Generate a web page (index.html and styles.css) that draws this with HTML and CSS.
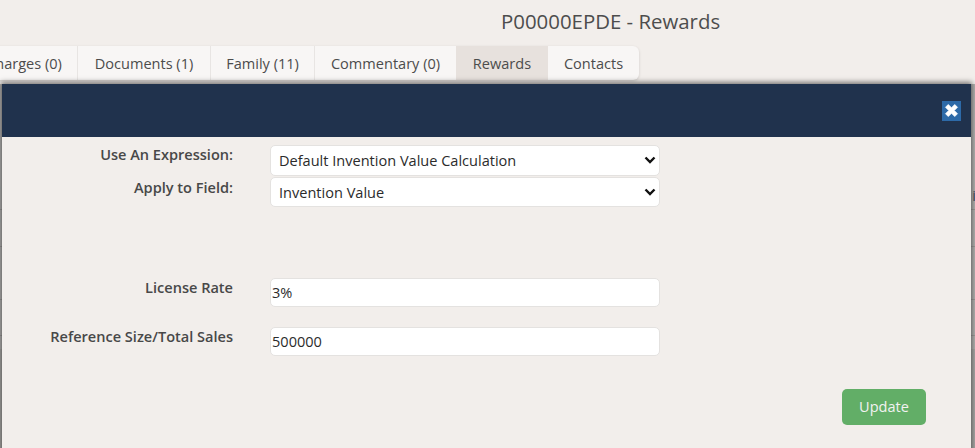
FILE: index.html
```html
<!DOCTYPE html>
<html lang="en-US"><head>
<meta charset="utf-8">
<meta name="viewport" content="width=device-width, initial-scale=1.0">
<title>P00000EPDE - Rewards</title>
<link rel="stylesheet" href="styles.css">
</head><body>

<div class="page">
	<h1 class="page-title">P00000EPDE - Rewards</h1>
	<div class="tabs">
		<a class="tab charges">Charges (0)</a>
		<a class="tab documents">Documents (1)</a>
		<a class="tab family">Family (11)</a>
		<a class="tab commentary">Commentary (0)</a>
		<a class="tab rewards active">Rewards</a>
		<a class="tab contacts">Contacts</a>
	</div>
	<div class="behind">
		<div class="behind-row r1"><span class="num">0</span><span class="name">i</span></div>
		<div class="behind-row r2"><span class="num">0</span></div>
		<div class="behind-row r3"></div>
		<div class="behind-row r4"></div>
		<div class="behind-row r5"></div>
	</div>
</div>

<div class="modal">
	<div class="modal-head">
		<button class="close" type="button" aria-label="Close">
			<svg width="15" height="15" viewBox="0 0 12 12"><path d="M1.2 3.4 3.4 1.2 6 3.8 8.6 1.2 10.8 3.4 8.2 6 10.8 8.6 8.6 10.8 6 8.2 3.4 10.8 1.2 8.6 3.8 6Z" fill="#fff" stroke="#fff" stroke-width="0.6" stroke-linejoin="round"/></svg>
		</button>
	</div>
	<form class="modal-body">
		<div class="row select-row">
			<label>Use An Expression:</label>
			<div class="select">Default Invention Value Calculation
				<svg class="chevron" width="12" height="8" viewBox="0 0 12 8"><path d="M1.5 1.5 6 6 10.5 1.5" fill="none" stroke="#111" stroke-width="2.4"/></svg>
			</div>
		</div>
		<div class="row select-row">
			<label>Apply to Field:</label>
			<div class="select">Invention Value
				<svg class="chevron" width="12" height="8" viewBox="0 0 12 8"><path d="M1.5 1.5 6 6 10.5 1.5" fill="none" stroke="#111" stroke-width="2.4"/></svg>
			</div>
		</div>
		<div class="row input-row rate">
			<label>License Rate</label>
			<input type="text" value="3%">
		</div>
		<div class="row input-row sales">
			<label>Reference Size/Total Sales</label>
			<input type="text" value="500000">
		</div>
		<div class="actions">
			<button class="update" type="button">Update</button>
		</div>
	</form>
</div>

</body></html>
```

FILE: styles.css
```css
html, body {
	margin : 0 ;
	height : 100% ;
	overflow : hidden ;
	background : #f2eeeb ;
	font-family : "Open Sans", "Noto Sans", sans-serif ;
	color : #4a4a4a ;
}
.page {
	display : flex ;
	flex-direction : column ;
	align-items : flex-start ;
	height : 100% ;
	overflow : hidden ;
}
.page-title {
	align-self : stretch ;
	margin : 0 ;
	padding : 8px 0 0 501px ;
	height : 46px ;
	box-sizing : border-box ;
	font-size : 20.4px ;
	line-height : 27px ;
	font-weight : 400 ;
	color : #4d4d4d ;
}
.tabs {
	display : flex ;
	margin-left : -35px ;
	height : 34px ;
	background : #f8f6f5 ;
	border-radius : 0 6px 6px 0 ;
	box-shadow : 0 1px 3px rgba( 0, 0, 0, 0.15 ) ;
}
.tab {
	box-sizing : border-box ;
	font-size : 14.55px ;
	line-height : 35px ;
	text-align : center ;
	border-right : 1px solid #e8e5e3 ;
	color : #4c4c4c ;
}
.tab.charges { width : 113px ; padding-left : 6px ; }
.tab.documents { width : 133px ; }
.tab.family { width : 104px ; }
.tab.commentary { width : 141px ; border-right : 0 ; }
.tab.rewards { width : 92px ; }
.tab.contacts { width : 91px ; border-right : 0 ; }
.tab.active { background : #e7e1dd ; border-right : 0 ; }

/* table of the page, only its ends show beside the modal */
.behind {
	align-self : stretch ;
	flex : 1 ;
	margin-top : 4px ;
	padding-top : 93px ;
	background : linear-gradient( #b2b1af 265px, #a8a6a4 265px ) ;
}
.behind-row {
	display : flex ;
	justify-content : space-between ;
	align-items : flex-start ;
	box-sizing : border-box ;
	border-bottom : 1px solid #9c9a98 ;
	font-size : 14.55px ;
	color : #3c4a5c ;
}
.behind-row.r1 { height : 33px ; }
.behind-row.r2 { height : 37px ; }
.behind-row.r3 { height : 53px ; }
.behind-row.r4 { height : 36px ; }
.behind-row.r5 { height : 13px ; border-bottom : 0 ; }
.num { margin-left : -8px ; line-height : 20px ; }
.name { margin-right : -1px ; line-height : 36px ; }

.modal {
	position : absolute ;
	left : 2px ;
	top : 84px ;
	width : 969px ;
	height : 380px ;
	background : #f2eeeb ;
	box-shadow : 0 -1px 5px 1px rgba( 0, 0, 0, 0.5 ) ;
}
.modal-head {
	display : flex ;
	justify-content : flex-end ;
	align-items : center ;
	box-sizing : border-box ;
	height : 53px ;
	padding : 0 10px 0 0 ;
	background : #20324d ;
}
.close {
	display : flex ;
	align-items : center ;
	justify-content : center ;
	width : 19px ;
	height : 20px ;
	padding : 0 ;
	border : 0 ;
	background : #2d6aa8 ;
}
.modal-body {
	display : flex ;
	flex-direction : column ;
}
.row {
	display : flex ;
	gap : 37px ;
}
.row label {
	width : 231px ;
	text-align : right ;
	font-size : 14.55px ;
	font-weight : 600 ;
	line-height : 20px ;
	color : #484848 ;
}
.input-row label { margin-top : -1px ; }
.select, .row input {
	box-sizing : border-box ;
	width : 390px ;
	background : #fff ;
	border : 1px solid #e4e2e0 ;
	border-radius : 5px ;
	font-family : inherit ;
	font-size : 14.55px ;
	color : #2b2b2b ;
}
.select {
	display : flex ;
	align-items : center ;
	justify-content : space-between ;
	height : 31px ;
	padding : 0 3px 1px 8px ;
	margin-bottom : 1px ;
}
.select-row:first-child { margin-top : 8px ; }
.select-row:first-child label { margin-top : -1px ; }
.select-row:nth-child( 2 ) .select { height : 30px ; }
.row input {
	height : 29px ;
	padding : 0 0 2px 1px ;
	outline : none ;
}
.rate { margin-top : 70px ; }
.sales { margin-top : 20px ; }
.actions {
	display : flex ;
	justify-content : flex-end ;
	padding : 33px 45px 0 0 ;
}
.update {
	width : 84px ;
	height : 36px ;
	padding : 0 0 2px ;
	border : 0 ;
	border-radius : 5px ;
	background : #62ae67 ;
	color : #f2f2f2 ;
	font-family : inherit ;
	font-size : 14.55px ;
}
```
